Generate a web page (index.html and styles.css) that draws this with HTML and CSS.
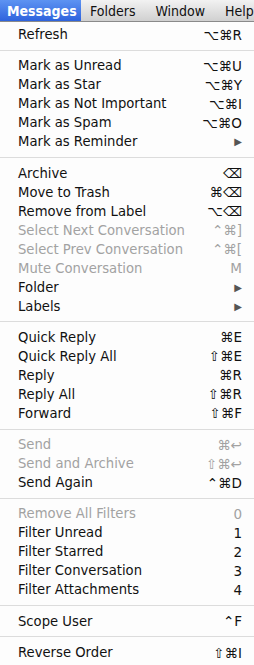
FILE: index.html
```html
<!DOCTYPE html>
<html>
<head>
<meta charset="utf-8">
<link rel="stylesheet" href="styles.css">
</head>
<body>
<div class="menubar">
  <span class="mb-item active">Messages</span>
  <span class="mb-item">Folders</span>
  <span class="mb-item">Window</span>
  <span class="mb-item">Help</span>
</div>
<div class="menu">
  <div class="row"><span>Refresh</span><span class="sc">⌥⌘R</span></div>
  <div class="sep"></div>
  <div class="row"><span>Mark as Unread</span><span class="sc">⌥⌘U</span></div>
  <div class="row"><span>Mark as Star</span><span class="sc">⌥⌘Y</span></div>
  <div class="row"><span>Mark as Not Important</span><span class="sc">⌥⌘I</span></div>
  <div class="row"><span>Mark as Spam</span><span class="sc">⌥⌘O</span></div>
  <div class="row"><span>Mark as Reminder</span><span class="sc arrow">▶</span></div>
  <div class="sep"></div>
  <div class="row"><span>Archive</span><span class="sc">⌫</span></div>
  <div class="row"><span>Move to Trash</span><span class="sc">⌘⌫</span></div>
  <div class="row"><span>Remove from Label</span><span class="sc">⌥⌫</span></div>
  <div class="row dis"><span>Select Next Conversation</span><span class="sc">⌃⌘]</span></div>
  <div class="row dis"><span>Select Prev Conversation</span><span class="sc">⌃⌘[</span></div>
  <div class="row dis"><span>Mute Conversation</span><span class="sc">M</span></div>
  <div class="row"><span>Folder</span><span class="sc arrow">▶</span></div>
  <div class="row"><span>Labels</span><span class="sc arrow">▶</span></div>
  <div class="sep"></div>
  <div class="row"><span>Quick Reply</span><span class="sc">⌘E</span></div>
  <div class="row"><span>Quick Reply All</span><span class="sc">⇧⌘E</span></div>
  <div class="row"><span>Reply</span><span class="sc">⌘R</span></div>
  <div class="row"><span>Reply All</span><span class="sc">⇧⌘R</span></div>
  <div class="row"><span>Forward</span><span class="sc">⇧⌘F</span></div>
  <div class="sep"></div>
  <div class="row dis"><span>Send</span><span class="sc">⌘↩</span></div>
  <div class="row dis"><span>Send and Archive</span><span class="sc">⇧⌘↩</span></div>
  <div class="row"><span>Send Again</span><span class="sc">⌃⌘D</span></div>
  <div class="sep"></div>
  <div class="row dis"><span>Remove All Filters</span><span class="sc">0</span></div>
  <div class="row"><span>Filter Unread</span><span class="sc">1</span></div>
  <div class="row"><span>Filter Starred</span><span class="sc">2</span></div>
  <div class="row"><span>Filter Conversation</span><span class="sc">3</span></div>
  <div class="row"><span>Filter Attachments</span><span class="sc">4</span></div>
  <div class="sep"></div>
  <div class="row"><span>Scope User</span><span class="sc">⌃F</span></div>
  <div class="sep"></div>
  <div class="row"><span>Reverse Order</span><span class="sc">⇧⌘I</span></div>
</div>
</body>
</html>
```
FILE: styles.css
```css
html, body {
  margin: 0;
  padding: 0;
  background: #fdfdfd;
}
body {
  width: 254px;
  height: 665px;
  overflow: hidden;
  font-family: "DejaVu Sans", "Lucida Grande", sans-serif;
  color: #111;
}
.menubar {
  height: 21px;
  display: flex;
  align-items: stretch;
  overflow: hidden;
  background: linear-gradient(#f2f2f2, #d0d0d0);
  border-bottom: 1px solid #8a8a8a;
  font-family: "DejaVu Sans Condensed", "DejaVu Sans", sans-serif;
  font-size: 14px;
  white-space: nowrap;
}
.mb-item {
  display: flex;
  align-items: center;
  flex: none;
  padding: 0 10px;
  color: #111;
}
.mb-item.active + .mb-item {
  padding-left: 9px;
}
.mb-item.active {
  box-sizing: border-box;
  width: 81px;
  padding: 0 0 0 7px;
  background: linear-gradient(#5d93f2, #2e63dd);
  color: #fff;
  font-weight: bold;
}
.menu {
  padding-top: 3px;
  font-size: 13.2px;
}
.row {
  height: 19px;
  display: flex;
  align-items: center;
  justify-content: space-between;
  padding: 0 12px 0 18px;
  white-space: nowrap;
}
.row.dis {
  color: #a2a2a2;
}
.sc {
  font-size: 13.5px;
}
.sc.arrow {
  font-size: 10px;
  color: #555;
}
.sep {
  height: 12.3px;
  display: flex;
  align-items: center;
}
.sep::before {
  content: "";
  flex: 1;
  height: 1px;
  background: #dcdcdc;
}
```
